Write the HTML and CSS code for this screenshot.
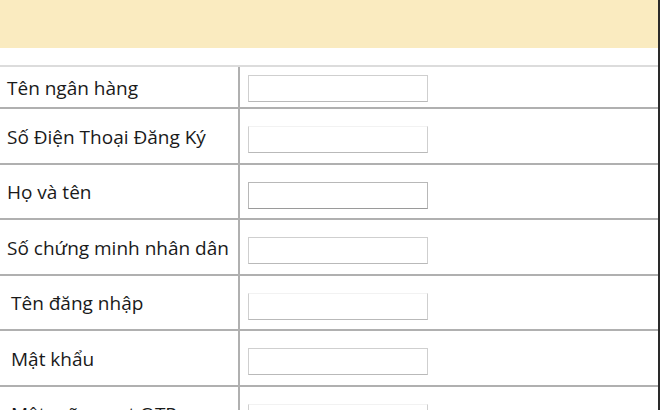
FILE: index.html
```html
<!DOCTYPE html>
<html lang="vi">
<head>
<meta charset="utf-8">
<link rel="stylesheet" href="styles.css">
</head>
<body>
<div class="page">
  <div class="banner"></div>
  <div class="gap"></div>
  <div class="form">
    <div class="row first">
      <div class="label">Tên ngân hàng</div>
      <div class="field"><span class="box"></span></div>
    </div>
    <div class="row">
      <div class="label">Số Điện Thoại Đăng Ký</div>
      <div class="field"><span class="box faint"></span></div>
    </div>
    <div class="row">
      <div class="label">Họ và tên</div>
      <div class="field"><span class="box dark"></span></div>
    </div>
    <div class="row">
      <div class="label">Số chứng minh nhân dân</div>
      <div class="field"><span class="box"></span></div>
    </div>
    <div class="row">
      <div class="label indent">Tên đăng nhập</div>
      <div class="field"><span class="box faint"></span></div>
    </div>
    <div class="row">
      <div class="label indent">Mật khẩu</div>
      <div class="field"><span class="box"></span></div>
    </div>
    <div class="row">
      <div class="label indent">Mật mã smart OTP</div>
      <div class="field"><span class="box faint"></span></div>
    </div>
  </div>
  <div class="edge"></div>
</div>
</body>
</html>
```

FILE: styles.css
```css
* { box-sizing: border-box; }
html, body {
  margin: 0;
  padding: 0;
  background: #ffffff;
  overflow: hidden;
}
.page {
  position: relative;
  width: 660px;
  height: 410px;
  overflow: hidden;
  font-family: "Open Sans", "Noto Sans", sans-serif;
  color: #1a1a1a;
}
.banner {
  height: 48px;
  background: #faebc0;
}
.gap {
  height: 17px;
}
.form {
  display: flex;
  flex-direction: column;
  width: 658px;
}
.row {
  display: grid;
  grid-template-columns: 240px 1fr;
  height: 55.5px;
  border-top: 2px solid #b0b0b0;
}
.row.first {
  height: 42px;
  border-top-color: #dcdcdc;
}
.label {
  display: flex;
  align-items: center;
  padding-left: 7px;
  padding-top: 2px;
  font-size: 19px;
  white-space: nowrap;
  border-right: 2px solid #b0b0b0;
}
.label.indent {
  padding-left: 11px;
}
.field {
  display: flex;
  align-items: center;
  padding-left: 8px;
  padding-top: 8px;
}
.row.first .field {
  padding-top: 2px;
}
.box {
  display: block;
  width: 180px;
  height: 27px;
  border: 1px solid #cfcfcf;
  border-bottom-color: #b9b9b9;
  background: #ffffff;
}
.box.faint {
  border-top-color: #f2f2f2;
}
.box.dark {
  border-color: #b8b8b8;
  border-bottom-color: #9a9a9a;
}
.edge {
  position: absolute;
  top: 0;
  right: 0;
  width: 2px;
  height: 410px;
  background: #2a2a2a;
}
```
